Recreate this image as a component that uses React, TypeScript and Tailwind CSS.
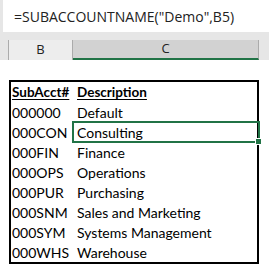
const rows: [string, string][] = [
  ["000000", "Default"],
  ["000CON", "Consulting"],
  ["000FIN", "Finance"],
  ["000OPS", "Operations"],
  ["000PUR", "Purchasing"],
  ["000SNM", "Sales and Marketing"],
  ["000SYM", "Systems Management"],
  ["000WHS", "Warehouse"],
];

export default function App() {
  return (
    <div
      className="w-[269px] h-[265px] bg-white overflow-hidden text-black"
      style={{ fontFamily: "Lato, 'Open Sans', sans-serif" }}
    >
      {/* formula bar */}
      <div className="h-[32px] bg-[#e6e6e6] pl-[3px]">
        <div
          className="h-full bg-white flex items-center pl-[11px] text-[14px] text-[#222]"
          style={{ fontFamily: "'Open Sans', sans-serif" }}
        >
          =SUBACCOUNTNAME("Demo",B5)
        </div>
      </div>
      <div className="h-[8px] bg-[#e6e6e6]" />

      {/* column headers */}
      <div
        className="h-[20px] bg-[#e6e6e6] flex text-[13px] text-[#222]"
        style={{ fontFamily: "'Open Sans', sans-serif" }}
      >
        <div className="w-[9px] border-r border-[#ababab]" />
        <div className="w-[64px] border-r border-[#ababab] bg-[#ededed] flex items-center justify-center">B</div>
        <div className="w-[186px] border-r border-[#ababab] bg-[#d2d2d2] border-b-2 border-b-[#217346] flex items-center justify-center">
          C
        </div>
        <div className="flex-1" />
      </div>

      {/* sheet */}
      <div className="pt-[20px] pl-[9px]">
        <div className="w-[250px] border-2 border-black text-[14px]">
          <div className="h-[20px] flex items-center font-bold text-[13.5px]">
            <div className="w-[62px] pl-[1px] underline underline-offset-2">SubAcct#</div>
            <div className="pl-[4px] underline underline-offset-2">Description</div>
          </div>
          {rows.map(([code, desc], i) => (
            <div key={code} className="relative h-[20px] flex items-center">
              <div className="w-[62px] pl-[1px]">{code}</div>
              <div className="pl-[4px]">{desc}</div>
              {i === 1 && (
                <div className="absolute left-[61px] -top-[1px] w-[188px] h-[22px] border-2 border-[#217346]">
                  <div className="absolute -right-[4px] -bottom-[4px] w-[5px] h-[5px] bg-[#217346] border border-white box-content" />
                </div>
              )}
            </div>
          ))}
        </div>
      </div>
    </div>
  );
}
